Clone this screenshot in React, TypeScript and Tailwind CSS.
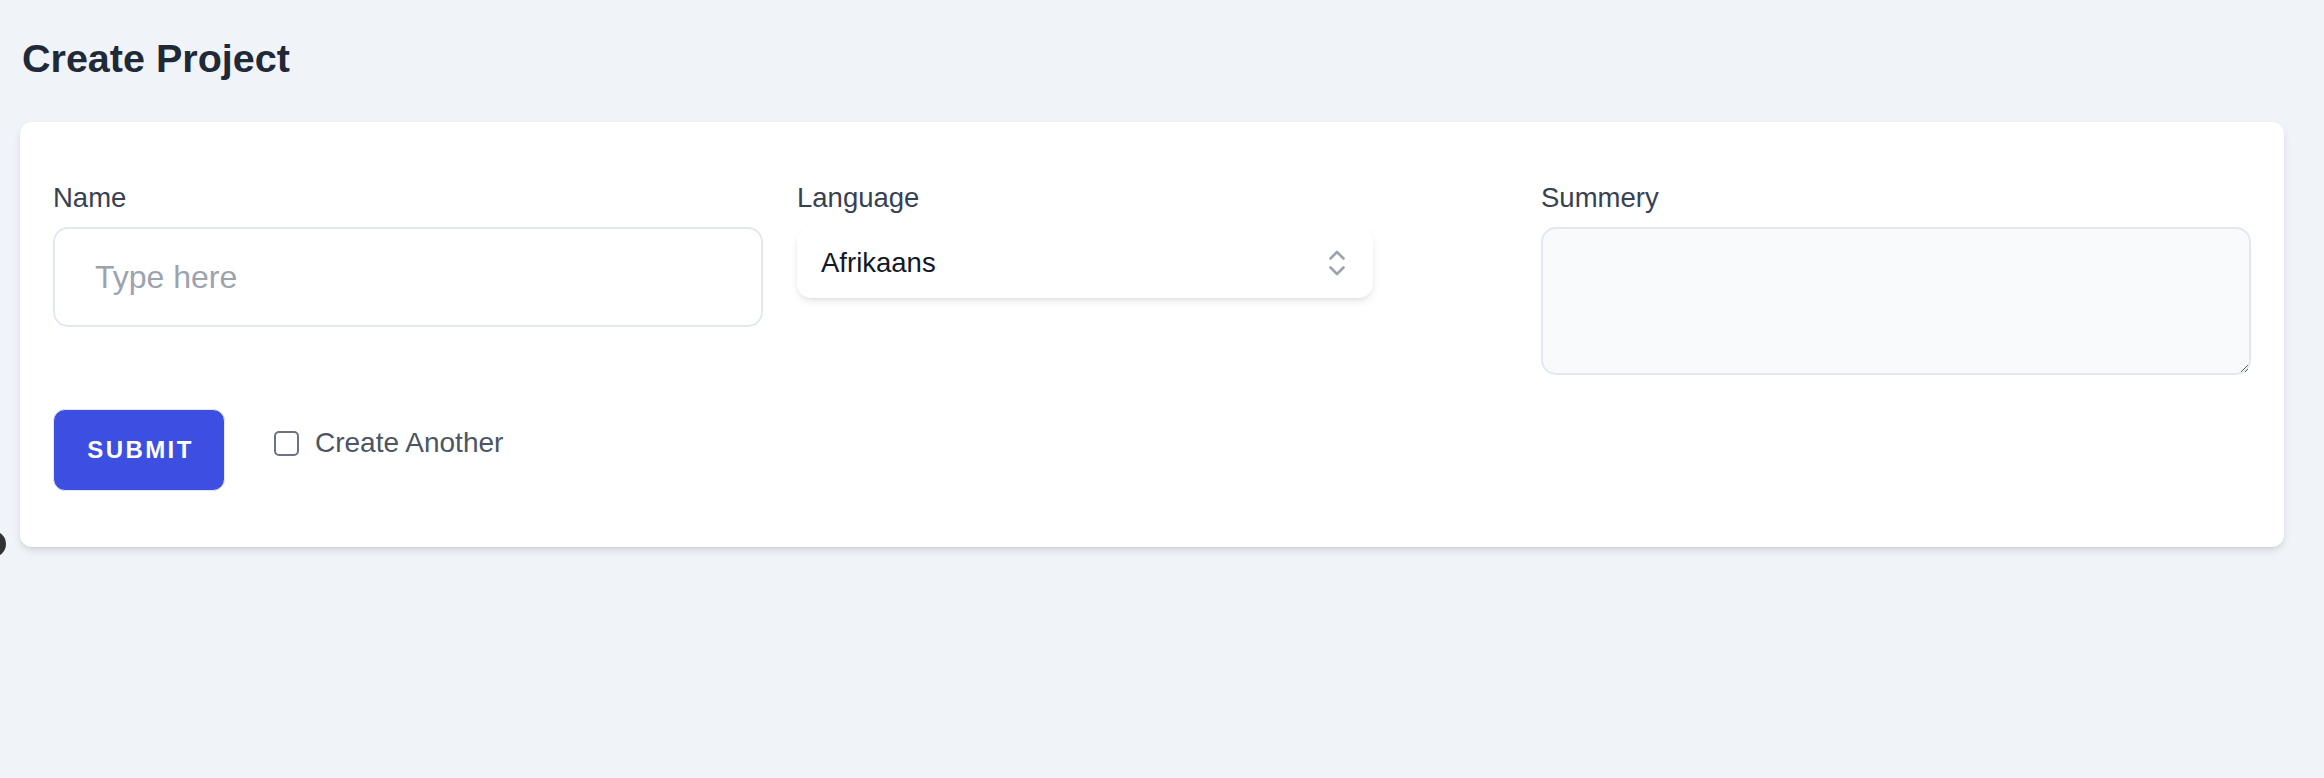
import { useState } from 'react';

const languages = ['Afrikaans', 'Albanian', 'Arabic', 'English', 'French', 'German'];

function Label({ children }: { children: React.ReactNode }) {
  return <label className="mb-[11px] block text-[27.5px] leading-[36px] text-[#374151]">{children}</label>;
}

export default function App() {
  const [language] = useState(languages[0]);

  return (
    <div
      className="relative min-h-screen overflow-hidden bg-[#f0f3f8] pl-[20px] pr-[40px] pt-[34px]"
      style={{ fontFamily: '"Liberation Sans", Arial, sans-serif' }}
    >
      {/* sidebar toggle peeking from the left edge */}
      <div className="absolute left-[-20px] top-[531px] h-[26px] w-[26px] rounded-full bg-[#333333]" />

      <h1 className="mb-[40px] pl-[2px] text-[39.5px] font-bold leading-[48px] text-[#1f2937]">Create Project</h1>

      <div className="rounded-[12px] bg-white px-[33px] pb-[56px] pt-[58px] shadow-[0_4px_8px_-1px_rgba(0,0,0,0.12),0_2px_4px_-2px_rgba(0,0,0,0.1)]">
        <div className="grid grid-cols-3 gap-x-[34px]">
          <div>
            <Label>Name</Label>
            <input
              type="text"
              placeholder="Type here"
              className="h-[100px] w-full rounded-[15px] border-2 border-[#e2e8f0] bg-white px-[40px] text-[32px] text-[#111827] outline-none placeholder:text-[#9ca3af]"
            />
          </div>

          <div>
            <Label>Language</Label>
            <button
              type="button"
              className="flex h-[71px] w-[576px] items-center justify-between rounded-[14px] bg-white pl-[24px] pr-[28px] text-[27.5px] text-[#111827] shadow-[0_4px_10px_-2px_rgba(0,0,0,0.12),0_2px_4px_-2px_rgba(0,0,0,0.08)]"
            >
              <span>{language}</span>
              <svg width="16" height="28" viewBox="0 0 16 28" fill="none" stroke="#9ca3af" strokeWidth="2.6" strokeLinecap="round" strokeLinejoin="round">
                <polyline points="1.5,9.5 8,3 14.5,9.5" />
                <polyline points="1.5,18.5 8,25 14.5,18.5" />
              </svg>
            </button>
          </div>

          <div>
            <Label>Summery</Label>
            <textarea className="block h-[148px] w-full rounded-[15px] border-2 border-[#e2e8f0] bg-[#f8fafc] p-[12px] text-[27px] outline-none" />
          </div>
        </div>

        <div className="mt-[34px] flex items-center">
          <button
            type="submit"
            className="h-[82px] w-[172px] rounded-[12px] border border-[#e5e7eb] bg-[#3d4fe0] pl-[3px] text-[24px] font-bold tracking-[0.1em] text-white"
          >
            SUBMIT
          </button>
          <label className="mb-[14px] ml-[49px] flex items-center gap-[16px] text-[28px] text-[#4b5563]">
            <input
              type="checkbox"
              className="h-[25px] w-[25px] appearance-none rounded-[5px] border-2 border-[#6b7280] bg-white"
            />
            Create Another
          </label>
        </div>
      </div>
    </div>
  );
}
